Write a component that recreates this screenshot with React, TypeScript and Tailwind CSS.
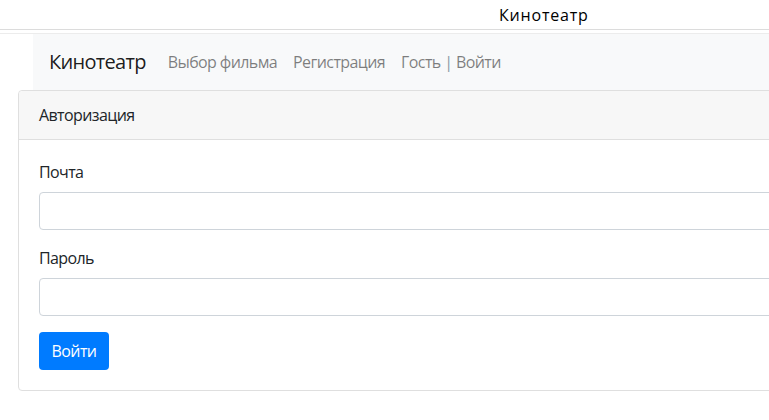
export default function App() {
  return (
    <div className="w-full min-h-screen overflow-hidden bg-white text-[#212529]" style={{ fontFamily: '"Open Sans", "Noto Sans", sans-serif' }}>
      {/* Top title bar */}
      <div className="h-[30px] border-b border-[#dcdcdc] flex items-center">
        <span className="ml-[499px] text-[16px] tracking-[0.8px] leading-none text-black">Кинотеатр</span>
      </div>
      <div className="h-[3px]" />
      <div className="border-t border-[#ececec] tracking-[-0.6px]">
        {/* Navbar */}
        <nav className="ml-[33px] w-[800px] h-[56px] bg-[#f8f9fa] px-4 flex items-center">
          <a className="text-[20px] leading-[30px] py-[5px] mr-[14px] whitespace-nowrap text-black/90 tracking-[-0.7px]">Кинотеатр</a>
          <div className="flex items-center text-[16px] leading-6 text-black/50 whitespace-nowrap">
            <a className="px-2 py-2">Выбор фильма</a>
            <a className="px-2 py-2">Регистрация</a>
            <a className="px-2 py-2">
              Гость <span className="text-[#8a9aa6]">|</span> Войти
            </a>
          </div>
        </nav>

        {/* Card */}
        <div className="ml-[18px] w-[800px] border border-[#dfdfdf] rounded-[4px] bg-white">
          <div className="px-5 py-3 bg-[#f7f7f7] border-b border-[#dfdfdf] text-[16px] leading-6 rounded-t-[4px]">
            Авторизация
          </div>
          <div className="p-5">
            <div className="mb-4">
              <label className="block text-[16px] leading-6 mb-2">Почта</label>
              <input type="email" className="block w-full h-[38px] border border-[#ced4da] rounded-[4px] px-3 outline-none" />
            </div>
            <div className="mb-4">
              <label className="block text-[16px] leading-6 mb-2">Пароль</label>
              <input type="password" className="block w-full h-[38px] border border-[#ced4da] rounded-[4px] px-3 outline-none" />
            </div>
            <button className="h-[38px] w-[70px] bg-[#007bff] text-white text-[16px] leading-6 rounded-[4px]">Войти</button>
          </div>
        </div>
      </div>
    </div>
  );
}
